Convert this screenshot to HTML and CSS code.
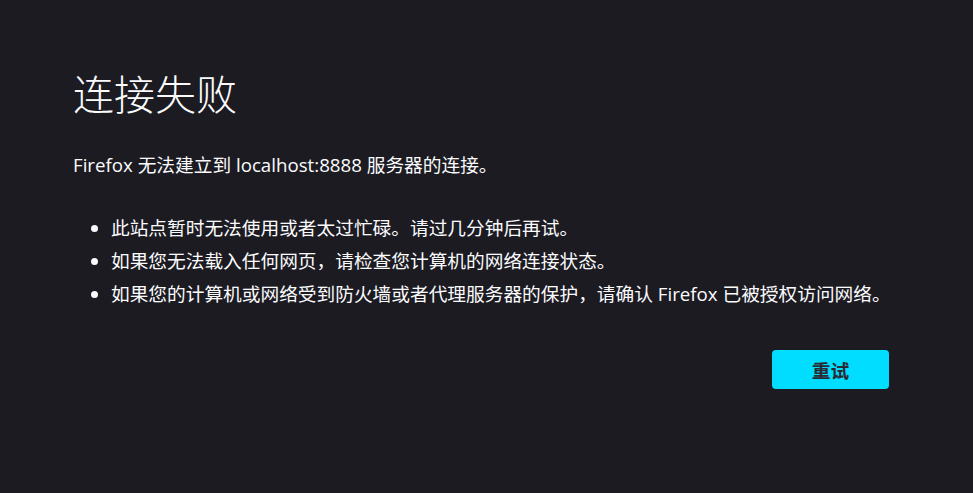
FILE: index.html
```html
<!DOCTYPE html>
<html lang="zh-CN">
<head>
<meta charset="utf-8">
<link rel="stylesheet" href="styles.css">
<title>连接失败</title>
</head>
<body>
<main class="container">
  <h1 class="title">连接失败</h1>
  <p class="desc">Firefox 无法建立到 localhost:8888 服务器的连接。</p>
  <ul class="tips">
    <li>此站点暂时无法使用或者太过忙碌。请过几分钟后再试。</li>
    <li>如果您无法载入任何网页，请检查您计算机的网络连接状态。</li>
    <li>如果您的计算机或网络受到防火墙或者代理服务器的保护，请确认 Firefox 已被授权访问网络。</li>
  </ul>
  <div class="actions">
    <button class="retry">重试</button>
  </div>
</main>
</body>
</html>
```
FILE: styles.css
```css
html, body {
  margin: 0;
  padding: 0;
  background: #1c1b22;
  color: #fbfbfe;
  font-family: "Open Sans", "Noto Sans CJK SC", sans-serif;
}
body {
  height: 493px;
  overflow: hidden;
}
.container {
  width: 816px;
  padding: 62px 0 0 73px;
  display: flex;
  flex-direction: column;
}
.title {
  margin: 0;
  font-size: 41px;
  font-weight: 300;
  line-height: 64px;
}
.desc {
  margin: 27px 0 0;
  font-size: 18.7px;
  line-height: 24px;
}
.tips {
  margin: 34px 0 0;
  padding: 0 0 0 38px;
  font-size: 18.7px;
  line-height: 33px;
}
.tips li {
  white-space: nowrap;
}
.actions {
  display: flex;
  justify-content: flex-end;
  margin-top: 40px;
}
.retry {
  width: 117px;
  height: 39px;
  border: none;
  border-radius: 4px;
  background: #00ddff;
  color: #2b2a33;
  font-family: "Open Sans", "Noto Sans CJK SC", sans-serif;
  font-size: 18.7px;
  font-weight: 700;
}
```
